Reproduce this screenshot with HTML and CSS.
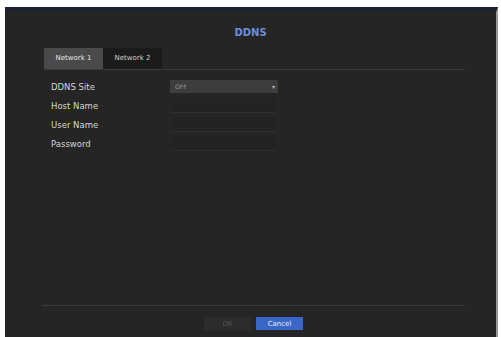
FILE: index.html
```html
<!DOCTYPE html>
<html lang="en">
<head>
    <meta charset="UTF-8">
    <title>DDNS</title>
    <link rel="stylesheet" href="styles.css">
</head>
<body>
    <div class="dialog">
        <div class="title">DDNS</div>
        <div class="tabs">
            <div class="tab active">Network 1</div>
            <div class="tab">Network 2</div>
        </div>
        <div class="form">
            <div class="row">
                <span class="label">DDNS Site</span>
                <div class="select">OFF<span class="arrow">&#9662;</span></div>
            </div>
            <div class="row">
                <span class="label">Host Name</span>
                <div class="field"></div>
            </div>
            <div class="row">
                <span class="label">User Name</span>
                <div class="field"></div>
            </div>
            <div class="row">
                <span class="label">Password</span>
                <div class="field"></div>
            </div>
        </div>
        <div class="footer">
            <button class="btn ok">OK</button>
            <button class="btn cancel">Cancel</button>
        </div>
    </div>
</body>
</html>
```

FILE: styles.css
```css
body {
    margin: 0;
    background: #fff;
    font-family: "DejaVu Sans", sans-serif;
}

.dialog {
    margin: 7px 3px 0 5px;
    height: 330px;
    background: #252525;
    border-top: 5px solid #1c2230;
    border-right: 2px solid #9a9a9a;
    display: flex;
    flex-direction: column;
    box-sizing: border-box;
}

.title {
    text-align: center;
    color: #6e8fd6;
    font-size: 10px;
    font-weight: bold;
    padding-top: 15px;
    height: 21px;
}

.tabs {
    display: flex;
    margin: 0 31px 0 39px;
    border-bottom: 1px solid #3a3a3a;
}

.tab {
    width: 59px;
    height: 21px;
    line-height: 21px;
    text-align: center;
    font-size: 7px;
    color: #cfcfcf;
    background: #1b1b1b;
}

.tab.active {
    background: #4a4a4a;
    color: #e6e6e6;
}

.form {
    margin: 7px 0 0 46px;
    flex: 1;
}

.row {
    display: flex;
    align-items: center;
    height: 19px;
}

.label {
    width: 119px;
    font-size: 8.5px;
    color: #d4d4d4;
}

.select {
    width: 108px;
    height: 13px;
    line-height: 13px;
    background: #3d3d3d;
    color: #9a9a9a;
    font-size: 6px;
    padding-left: 5px;
    box-sizing: border-box;
    display: flex;
    justify-content: space-between;
}

.arrow {
    width: 9px;
    text-align: center;
    color: #bbb;
    font-size: 6px;
}

.field {
    width: 106px;
    height: 15px;
    background: #232323;
    border-bottom: 1px solid #2e2e2e;
    box-sizing: border-box;
}

.footer {
    margin: 0 31px 0 37px;
    border-top: 1px solid #3a3a3a;
    height: 32px;
    display: flex;
    justify-content: center;
    align-items: flex-start;
    padding-top: 11px;
    box-sizing: border-box;
    gap: 5px;
}

.btn {
    width: 47px;
    height: 13px;
    border: none;
    font-family: "DejaVu Sans", sans-serif;
    font-size: 7px;
    padding: 0;
}

.ok {
    background: #2c2c2c;
    color: #555;
}

.cancel {
    background: #3a66c8;
    color: #e8ecf8;
}
```
